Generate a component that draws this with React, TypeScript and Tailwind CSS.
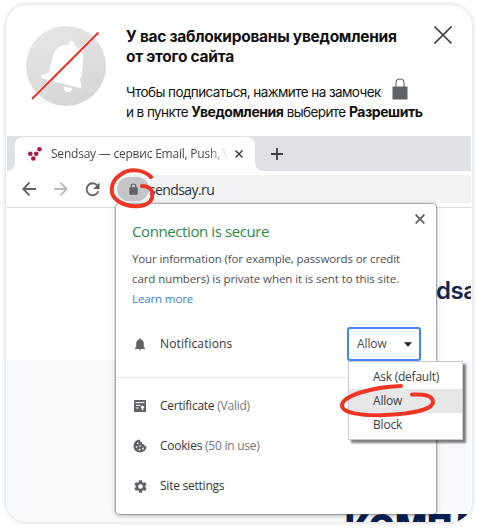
import React from "react";

const segoe = "font-['Open_Sans','Noto_Sans',sans-serif]";

function MutedBell() {
  return (
    <svg width="84" height="84" viewBox="24 24 84 84" className="shrink-0">
      <defs>
        <linearGradient id="disc" x1="0.2" y1="0" x2="0.6" y2="1">
          <stop offset="0" stopColor="#e6e6e6" />
          <stop offset="1" stopColor="#d6d6d6" />
        </linearGradient>
      </defs>
      <circle cx="66" cy="66" r="40" fill="url(#disc)" />
      <path
        d="M69 45 C69 42 70 40.700 72 41 C74.500 41.500 75 43 74.500 46 C81 48 84 53 83.300 60 C82.500 67 82 73 81.500 77 C79 79 80.500 81 81 83 L81.500 88.500 L41 78 L41 75 C45 73.500 48 74 49 71.500 L53 56 C55 49 61 44 69 45 Z"
        fill="#fff"
      />
      <path d="M63.500 86.500 C64 93.500 71 93.500 72.500 88.500 Z" fill="#fff" />
      <path d="M32 99 L98.500 32.500" stroke="#fff" strokeWidth="3" />
      <path d="M32 99 L98.500 32.500" stroke="#ee2f24" strokeWidth="2" />
    </svg>
  );
}

function Header() {
  return (
    <header className="flex h-[131px] shrink-0 pl-[18px] pt-[19px] font-['Inter','Noto_Sans',sans-serif] text-[#111]">
      <MutedBell />
      <div className="ml-[18px] mt-[3px] flex-1 whitespace-nowrap">
        <h1 className="text-[15.5px] font-bold leading-5 tracking-[-0.27px]">
          У вас заблокированы уведомления
          <br />
          от этого сайта
        </h1>
        <div className="mt-[15px] flex items-center text-[13.5px] leading-5 tracking-[-0.58px]">
          Чтобы подписаться, нажмите на замочек
          <svg width="16" height="22" viewBox="0 0 16 22" className="-my-2 ml-[11px] -translate-y-[3px]">
            <path d="M4 9 V5 Q4 1 8 1 Q12 1 12 5 V9" fill="none" stroke="#5f6368" strokeWidth="1.100" />
            <path d="M0.500 8.500 H15.500 V21.500 H0.500Z" fill="#5f6368" />
          </svg>
        </div>
        <p className="text-[13.5px] leading-5 tracking-[-0.58px]">
          и в пункте <b className="text-[14px] tracking-[-0.45px]">Уведомления</b> выберите{" "}
          <b className="text-[14px] tracking-[-0.45px]">Разрешить</b>
        </p>
      </div>
      <svg width="20" height="20" viewBox="0 0 20 20" className="mr-[19px] mt-[1px] shrink-0">
        <path d="M1.500 1.500 L18.500 18.500 M18.500 1.500 L1.500 18.500" stroke="#3a3a3c" strokeWidth="1.700" />
      </svg>
    </header>
  );
}

function TabStrip() {
  return (
    <div className="flex h-[35px] shrink-0 bg-[#dee1e6] pt-px">
      <div className="w-2 bg-white">
        <div className="h-full rounded-br-lg bg-[#dee1e6]" />
      </div>
      <div className="flex w-[240px] items-center rounded-t-lg bg-white pl-[13px]">
        <svg width="14" height="14" viewBox="0 0 14 14" fill="#a51c45" className="shrink-0">
          <circle cx="2.300" cy="6.800" r="2.300" />
          <circle cx="8.200" cy="6.800" r="2.300" />
          <circle cx="5.300" cy="11.500" r="2.300" />
          <circle cx="11.500" cy="2.300" r="2.300" />
        </svg>
        <span className="ml-[9px] w-[179px] overflow-hidden whitespace-nowrap text-[12px] tracking-[-0.22px] text-[#45494d] [mask-image:linear-gradient(to_right,black_88%,transparent_99%)]">
          Sendsay — сервис Email, Push, V
        </span>
        <svg width="8" height="8" viewBox="0 0 8 8" className="ml-[5px] shrink-0">
          <path d="M.5 .5 L7.500 7.500 M7.500 .5 L.5 7.500" stroke="#3c4043" strokeWidth="1.500" />
        </svg>
      </div>
      <div className="flex-1 bg-white">
        <div className="flex h-full items-center rounded-bl-lg bg-[#dee1e6] pl-4">
          <svg width="12" height="12" viewBox="0 0 12 12">
            <path d="M6 0 V12 M0 6 H12" stroke="#3c4043" strokeWidth="1.800" />
          </svg>
        </div>
      </div>
    </div>
  );
}

function Toolbar() {
  return (
    <div className="flex h-[37px] shrink-0 items-center border-b border-[#dadce0] bg-white pl-[15px]">
      <svg width="14" height="14" viewBox="0 0 14 14" fill="none" stroke="#5f6368" strokeWidth="1.900">
        <path d="M7.500 .7 L1.300 7 L7.500 13.300 M1.300 7 H14" />
      </svg>
      <svg width="14" height="14" viewBox="0 0 14 14" fill="none" stroke="#babcbe" strokeWidth="1.900" className="ml-[18px]">
        <path d="M6.500 .7 L12.700 7 L6.500 13.300 M12.700 7 H0" />
      </svg>
      <svg width="15" height="15" viewBox="0 0 15 15" className="ml-[17px]">
        <path d="M12.300 3.500 A6 6 0 1 0 13.300 9.200" fill="none" stroke="#5f6368" strokeWidth="1.900" />
        <path d="M14.600 .5 V7 H8.200Z" fill="#5f6368" />
      </svg>
      <div className="ml-[14px] flex h-7 flex-1 items-center rounded-l-full bg-[#f1f3f4] pl-[3px]">
        <span className="flex h-6 w-[32px] items-center justify-center rounded-full bg-[#c3c5c7]">
          <svg width="9" height="12" viewBox="0 0 9 12">
            <path d="M2.200 5 V3.200 Q2.200 1 4.500 1 Q6.800 1 6.800 3.200 V5" fill="none" stroke="#5f6368" strokeWidth="1.200" />
            <rect x=".3" y="4.200" width="8.400" height="7.500" rx=".7" fill="#5f6368" />
          </svg>
        </span>
        <span className="text-[14px] tracking-[-0.6px] text-[#303336]">sendsay.ru</span>
      </div>
    </div>
  );
}

function Row({ icon, children }: { icon: React.ReactNode; children: React.ReactNode }) {
  return (
    <div className="flex h-10 items-center pl-[17px] text-[12px] text-[#33363a]">
      <span className="mr-[13px] flex w-[14px] justify-center">{icon}</span>
      <span className="whitespace-nowrap">{children}</span>
    </div>
  );
}

function CertificateIcon() {
  return (
    <svg width="12" height="12" viewBox="0 0 12 12">
      <rect width="12" height="12" rx="1" fill="#5f6368" />
      <path d="M1.500 2.600 H10.500 M2 5.300 H6.500 M2 8 H4.500" stroke="#fff" strokeWidth="1" />
      <path d="M8.500 5.200 L10.500 7.200 L9.200 8.500 V10.300 H7.800 V8.500 L6.500 7.200Z" fill="#fff" />
    </svg>
  );
}

function CookieIcon() {
  return (
    <svg width="14" height="14" viewBox="0 0 14 14">
      <path d="M7 .4 A6.600 6.600 0 1 0 13.600 7.200 C12.200 7.600 11 6.800 11.200 5.300 C9.500 5.500 8.700 4.500 9 3.200 C7.500 3 6.800 1.900 7 .4Z" fill="#5f6368" />
      <g fill="#fff">
        <circle cx="4.800" cy="4.300" r=".9" />
        <circle cx="3.500" cy="7.800" r=".9" />
        <circle cx="7" cy="7" r=".8" />
        <circle cx="6.500" cy="10.700" r=".9" />
        <circle cx="10" cy="9.500" r=".9" />
      </g>
    </svg>
  );
}

function GearIcon() {
  return (
    <svg width="13" height="13" viewBox="2 2 20 20">
      <path
        fill="#5f6368"
        d="M19.140 12.940c.04-.3.060-.610.060-.940 0-.320-.020-.640-.070-.940l2.030-1.580a.49.49 0 0 0 .12-.610l-1.920-3.320a.49.49 0 0 0-.59-.22l-2.390.96a7 7 0 0 0-1.620-.940l-.360-2.540A.48.48 0 0 0 13.920 2.400h-3.840a.47.47 0 0 0-.470.410L9.250 5.350a7 7 0 0 0-1.620.940l-2.390-.96a.48.48 0 0 0-.590.220L2.740 8.870a.48.48 0 0 0 .120.610l2.030 1.580a7 7 0 0 0 0 1.880l-2.030 1.580a.49.49 0 0 0-.120.610l1.920 3.320c.120.220.370.290.590.220l2.390-.960c.5.380 1.030.7 1.620.940l.360 2.540c.050.240.240.410.480.410h3.840c.240 0 .440-.170.470-.410l.360-2.540a7 7 0 0 0 1.620-.940l2.390.960c.220.080.470 0 .590-.220l1.920-3.320a.47.47 0 0 0-.120-.610zM12 15.600A3.600 3.600 0 1 1 12 8.400a3.600 3.600 0 0 1 0 7.200"
      />
    </svg>
  );
}

function BellIcon() {
  return (
    <svg width="10" height="13" viewBox="0 0 10 13" fill="#5f6368">
      <path d="M4.200 .9 Q5 -.4 5.800 .9 V1.600 Q8.800 2.400 8.800 5.500 V9 L10 10.300 V11 H0 V10.300 L1.200 9 V5.500 Q1.200 2.400 4.200 1.600Z" />
      <path d="M3.700 11.600 H6.300 Q5 13.700 3.700 11.600Z" />
    </svg>
  );
}

function PermissionSelect() {
  return (
    <div className="relative mr-[15px] flex h-[34px] w-[74px] items-center justify-between rounded-[3px] border-2 border-[#4285f4] bg-white pl-2 pr-[7px] text-[12px] text-[#4b4f54]">
      <span className="tracking-[-0.1px]">Allow</span>
      <svg width="8" height="5" viewBox="0 0 8 5">
        <path d="M0 .3 H8 L4 4.700Z" fill="#222" />
      </svg>
      <div className="absolute left-[-1px] top-[32px] z-10 flex h-[79px] w-[115px] flex-col border border-[#c8c8ce] bg-white pt-[3px] text-[12px] leading-6 text-[#3b3e43] shadow-[3px_3px_2px_rgba(0,0,0,0.5)]">
        <span className="h-6 whitespace-nowrap pl-[24px] tracking-[-0.25px]">Ask (default)</span>
        <span className="h-6 bg-[#e7e7e7] pl-[24px] tracking-[-0.2px]">Allow</span>
        <span className="h-6 pl-[24px] tracking-[-0.2px]">Block</span>
      </div>
      <svg width="96" height="36" viewBox="340 383 96 36" fill="none" className="absolute left-[-9px] top-[54px] z-20">
        <path
          d="M401 386 C371 387 343 396 342 405 C341 413 362 416 385 415 C409 414 433 410 433 402 C433 396 426 394 412 394.500"
          stroke="#ee3524"
          strokeWidth="4"
          strokeLinecap="round"
        />
      </svg>
    </div>
  );
}

function SecurityPopup() {
  return (
    <section className="absolute left-[109px] top-[68px] h-[310px] w-[320px] rounded-[4px] bg-white shadow-[0_0_1px_1px_rgba(90,95,100,0.45),0_1px_5px_rgba(0,0,0,0.35)]">
      <div className="flex h-[120px] justify-between pl-[16px] pr-[11px]">
        <div className="whitespace-nowrap pt-[17px]">
          <h2 className="text-[15px] leading-5 tracking-[-0.4px] text-[#2a8a4c]">Connection is secure</h2>
          <p className="mt-[8px] text-[11.5px] leading-5 tracking-[-0.12px] text-[#4b4f54]">
            Your information (for example, passwords or credit
            <br />
            <span className="tracking-[-0.08px]">card numbers) is private when it is sent to this site.</span>
            <br />
            <a className="text-[#3b7ddd]">Learn more</a>
          </p>
        </div>
        <svg width="10" height="10" viewBox="0 0 10 10" className="-ml-4 mt-[10px] shrink-0">
          <path d="M.6 .6 L9.400 9.400 M9.400 .6 L.6 9.400" stroke="#5f6368" strokeWidth="1.900" />
        </svg>
      </div>
      <div className="flex h-[54px] items-start justify-between border-b border-[#e3e5e7]">
        <Row icon={<BellIcon />}>
          <span className="tracking-[0.14px]">Notifications</span>
        </Row>
        <div className="mt-[3px]">
          <PermissionSelect />
        </div>
      </div>
      <div className="pt-[8px] tracking-[-0.24px]">
        <Row icon={<CertificateIcon />}>
          Certificate <span className="text-[#73777c]">(Valid)</span>
        </Row>
        <Row icon={<CookieIcon />}>
          Cookies <span className="text-[#73777c]">(50 in use)</span>
        </Row>
        <Row icon={<GearIcon />}>Site settings</Row>
      </div>
    </section>
  );
}

export default function App() {
  return (
    <div className="h-[528px] w-[478px] overflow-hidden bg-white pl-[6px] pt-[5px]">
      <main className="flex h-[517px] w-[466px] flex-col overflow-hidden rounded-[21px] bg-white shadow-[0_0_5px_rgba(0,0,0,0.2)]">
        <Header />
        <div className={`relative mx-px flex flex-1 flex-col ${segoe}`}>
          <TabStrip />
          <Toolbar />
          <div className="flex h-[152px] shrink-0 justify-end overflow-hidden">
            <span className="mt-[65px] w-[35px] overflow-hidden whitespace-nowrap font-['Inter',sans-serif] text-[24px] font-semibold leading-9 tracking-[-0.5px] text-[#172651]">
              dsay
            </span>
          </div>
          <div className="flex flex-1 items-end overflow-hidden bg-[#f7fafc]">
            <span className="ml-[338px] h-[11px] whitespace-nowrap font-['Inter',sans-serif] text-[33px] font-black leading-[30px] tracking-[0.5px] text-[#081e4f]">
              КОМПЛ
            </span>
          </div>
          <SecurityPopup />
          <svg width="46" height="42" viewBox="108 167 46 42" fill="none" className="absolute left-[101px] top-[31px]">
            <path
              d="M151 177 C143 169 129 168 120 175 C111 181 108 194 118 201 C130 209 149 208 152 198 C154 190 149 186 142 186"
              stroke="#ee3524"
              strokeWidth="4"
              strokeLinecap="round"
            />
          </svg>
        </div>
      </main>
    </div>
  );
}
